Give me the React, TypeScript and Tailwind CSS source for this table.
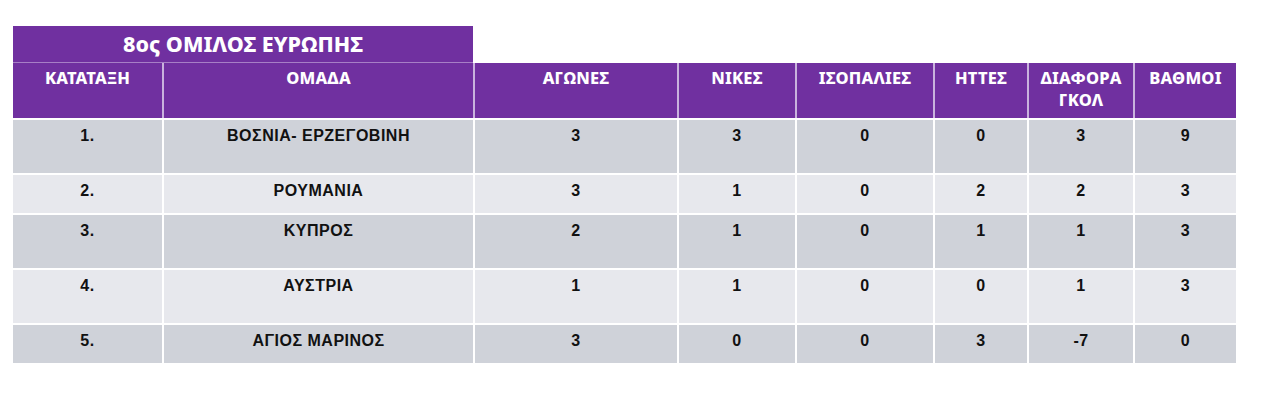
import React from "react";

const cols = [
  "w-[149px]",
  "w-[311px]",
  "w-[204px]",
  "w-[118px]",
  "w-[138px]",
  "w-[94px]",
  "w-[106px]",
  "w-[103px]",
];

const headers = [
  ["ΚΑΤΑΤΑΞΗ"],
  ["ΟΜΑΔΑ"],
  ["ΑΓΩΝΕΣ"],
  ["ΝΙΚΕΣ"],
  ["ΙΣΟΠΑΛΙΕΣ"],
  ["ΗΤΤΕΣ"],
  ["ΔΙΑΦΟΡΑ", "ΓΚΟΛ"],
  ["ΒΑΘΜΟΙ"],
];

const rows: { cells: string[]; tall: boolean; dark: boolean }[] = [
  { cells: ["1.", "ΒΟΣΝΙΑ- ΕΡΖΕΓΟΒΙΝΗ", "3", "3", "0", "0", "3", "9"], tall: true, dark: true },
  { cells: ["2.", "ΡΟΥΜΑΝΙΑ", "3", "1", "0", "2", "2", "3"], tall: false, dark: false },
  { cells: ["3.", "ΚΥΠΡΟΣ", "2", "1", "0", "1", "1", "3"], tall: true, dark: true },
  { cells: ["4.", "ΑΥΣΤΡΙΑ", "1", "1", "0", "0", "1", "3"], tall: true, dark: false },
  { cells: ["5.", "ΑΓΙΟΣ ΜΑΡΙΝΟΣ", "3", "0", "0", "3", "-7", "0"], tall: false, dark: true },
];

export default function App() {
  return (
    <div className="w-[1280px] h-[402px] bg-white pl-[13px] pt-[26px]">
      <div className="w-[1223px] flex flex-col">
        <div className="w-[460px] h-[37px] bg-[#7030a0] flex items-center justify-center text-white font-extrabold text-[21.5px] leading-[28px] font-['Noto_Sans',sans-serif] border-b border-[#a77fc6]">
          8ος ΟΜΙΛΟΣ ΕΥΡΩΠΗΣ
        </div>
        <div className="flex h-[55px] bg-[#7030a0]">
          {headers.map((h, i) => (
            <div
              key={i}
              className={`${cols[i]} ${i > 0 ? "border-l-[2px] border-[#c9b2dd]" : ""} pt-[4px] flex flex-col items-center text-white font-extrabold text-[16.5px] leading-[22px] tracking-[0.2px] font-['Noto_Sans',sans-serif]`}
            >
              {h.map((l) => (
                <span key={l}>{l}</span>
              ))}
            </div>
          ))}
        </div>
        {rows.map((r, ri) => (
          <div
            key={ri}
            className={`flex border-t-[2px] border-white ${r.tall ? "h-[55px]" : "h-[40px]"} ${r.dark ? "bg-[#cfd2d9]" : "bg-[#e7e8ed]"}`}
          >
            {r.cells.map((c, i) => (
              <div
                key={i}
                className={`${cols[i]} ${i > 0 ? "border-l-[2px] border-white" : ""} pt-[6px] text-center text-[#111] font-bold text-[16px] leading-[20px] tracking-[0.5px] font-['Liberation_Sans',Arial,sans-serif]`}
              >
                {c}
              </div>
            ))}
          </div>
        ))}
      </div>
    </div>
  );
}
